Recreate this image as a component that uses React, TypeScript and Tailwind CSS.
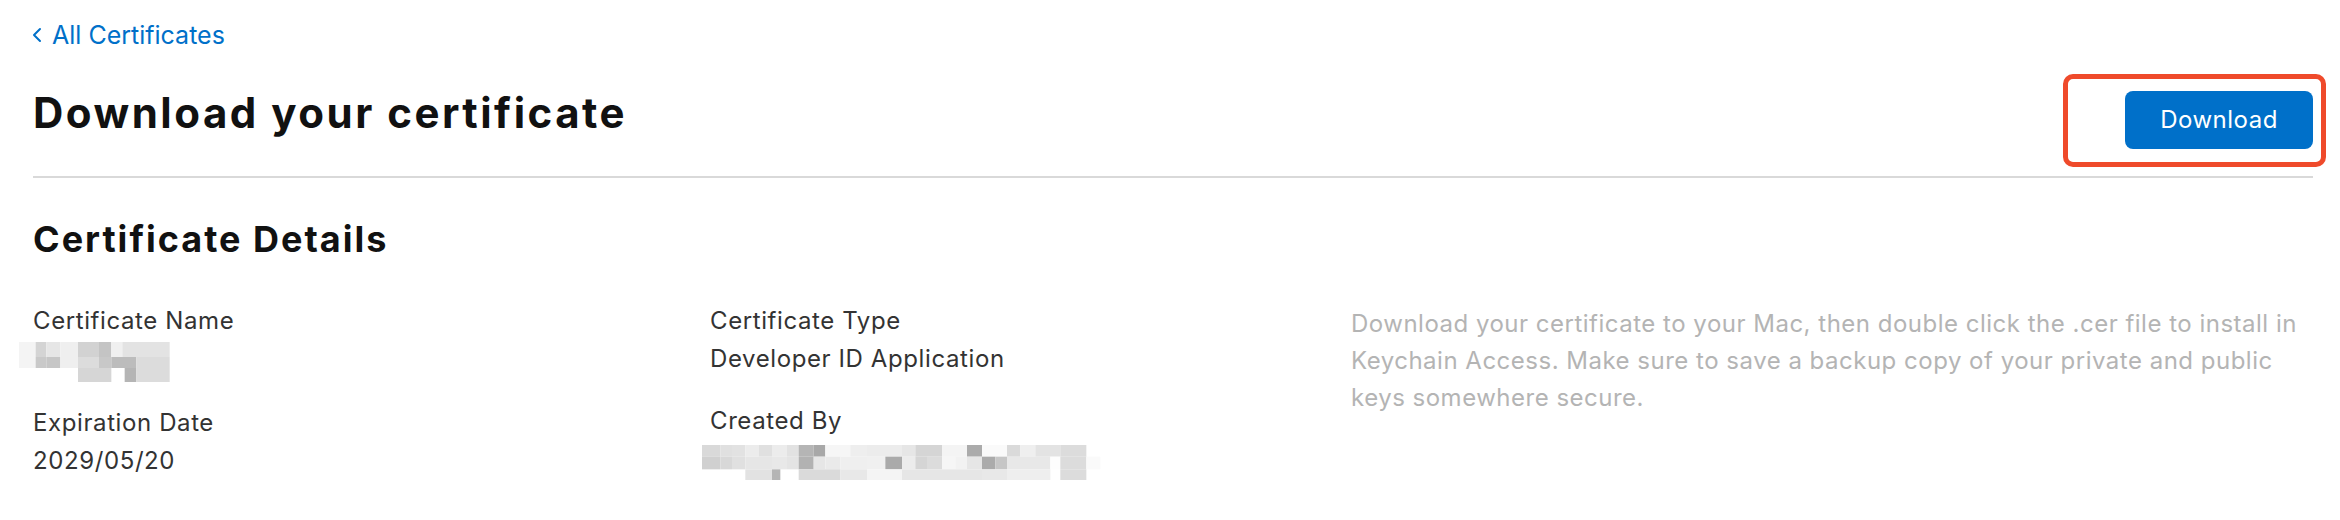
import { ChevronLeft } from 'lucide-react'

type Cell = [number, number, number, number, string]

// pixelated (redacted) blocks, coords in the zoomed reference grid
const nameBlur: Cell[] = [
  [28, 140, 50, 78, '#f4f4f4'],
  [78, 140, 32, 45, '#d4d4d4'],
  [78, 185, 32, 33, '#c9c9c9'],
  [110, 140, 42, 45, '#e6e6e6'],
  [110, 185, 42, 33, '#c6c6c6'],
  [152, 140, 53, 78, '#efefef'],
  [205, 140, 63, 45, '#d2d2d2'],
  [205, 185, 63, 33, '#dcdcdc'],
  [205, 218, 100, 42, '#d6d6d6'],
  [268, 140, 37, 45, '#c4c4c4'],
  [268, 185, 37, 33, '#c8c8c8'],
  [305, 140, 33, 45, '#f0f0f0'],
  [305, 185, 75, 33, '#bcbcbc'],
  [338, 140, 142, 45, '#e3e3e3'],
  [345, 218, 35, 42, '#b5b5b5'],
  [380, 185, 100, 75, '#dcdcdc'],
]

const creatorRow1: [number, number, string][] = [
  [65, 120, '#d9d9d9'], [120, 155, '#e0e0e0'], [155, 195, '#e2e2e2'], [195, 235, '#ececec'],
  [235, 275, '#e0e0e0'], [275, 320, '#ececec'], [320, 355, '#e2e2e2'], [355, 400, '#b5b5b5'],
  [400, 435, '#a8a8a8'], [435, 510, '#f6f6f6'], [510, 560, '#eeeeee'], [560, 665, '#ececec'],
  [665, 705, '#e6e6e6'], [705, 785, '#d5d5d5'], [785, 860, '#f4f4f4'], [860, 905, '#ababab'],
  [905, 980, '#fafafa'], [980, 1020, '#dadada'], [1020, 1065, '#efefef'], [1065, 1140, '#e3e3e3'],
  [1140, 1218, '#dcdcdc'],
]
const creatorRow2: [number, number, string][] = [
  [65, 120, '#d0d0d0'], [120, 155, '#d8d8d8'], [155, 195, '#e0e0e0'], [195, 275, '#e6e6e6'],
  [275, 320, '#e8e8e8'], [320, 355, '#e4e4e4'], [355, 400, '#b2b2b2'], [400, 435, '#e6e6e6'],
  [435, 480, '#eaeaea'], [480, 560, '#efefef'], [560, 615, '#f0f0f0'], [615, 665, '#aaaaaa'],
  [665, 705, '#ececec'], [705, 740, '#d5d5d5'], [740, 785, '#dcdcdc'], [785, 825, '#f6f6f6'],
  [825, 860, '#f2f2f2'], [860, 905, '#e6e6e6'], [905, 945, '#ababab'], [945, 980, '#c6c6c6'],
  [980, 1110, '#e8e8e8'], [1110, 1140, '#fdfdfd'], [1140, 1218, '#dcdcdc'], [1218, 1260, '#fafafa'],
]
const creatorRow3: [number, number, string][] = [
  [195, 275, '#e2e2e2'], [275, 300, '#b5b5b5'], [355, 480, '#dadada'], [480, 560, '#e8e8e8'],
  [560, 665, '#f4f4f4'], [665, 905, '#e6e6e6'], [905, 980, '#e8e8e8'], [980, 1110, '#eeeeee'],
  [1140, 1218, '#dcdcdc'],
]

function NameBlur() {
  return (
    <svg width="151" height="40" viewBox="28 140 453 120" className="-ml-[14px] mt-[2px] block">
      {nameBlur.map(([x, y, w, h, c], i) => (
        <rect key={i} x={x} y={y} width={w} height={h} fill={c} />
      ))}
    </svg>
  )
}

function CreatorBlur() {
  const rows: [number, number, [number, number, string][]][] = [
    [495, 35, creatorRow1],
    [530, 38, creatorRow2],
    [568, 32, creatorRow3],
  ]
  return (
    <svg width="400" height="35" viewBox="65 495 1200 105" className="-ml-[8px] mt-[5px] block">
      {rows.map(([y, h, cells]) =>
        cells.map(([x0, x1, c]) => (
          <rect key={`${y}-${x0}`} x={x0} y={y} width={x1 - x0} height={h} fill={c} />
        )),
      )}
    </svg>
  )
}

function Field({ label, children }: { label: string; children: React.ReactNode }) {
  return (
    <div>
      <p className="text-[24px] leading-[38px] tracking-[0.6px] text-[#333333]">{label}</p>
      <div className="h-[38px] text-[24px] leading-[38px] tracking-[0.6px] text-[#333333]">{children}</div>
    </div>
  )
}

export default function App() {
  return (
    <div className="h-[520px] w-[2340px] bg-white pl-[33px] pr-[27px] pt-[20px] font-['Inter',sans-serif] antialiased">
      <a href="#" className="flex items-center gap-[3px] text-[25px] leading-[30px] text-[#0070c9]">
        <ChevronLeft size={24} strokeWidth={2} className="-ml-[8px]" />
        All Certificates
      </a>

      <div className="mt-[39px] flex items-start justify-between">
        <h1 className="text-[42px] font-bold leading-[48px] tracking-[2.5px] text-[#111111]">
          Download your certificate
        </h1>
        <div className="relative mt-[2px]">
          <div className="absolute -bottom-[18px] -left-[62px] -right-[13px] -top-[17px] rounded-[10px] border-[5px] border-[#ef4a2b]" />
          <button
            type="button"
            className="relative h-[58px] w-[188px] rounded-[8px] bg-[#0070c9] text-[24px] tracking-[0.5px] text-white"
          >
            Download
          </button>
        </div>
      </div>

      <div className="mt-[27px] h-[2px] bg-[#d9d9d9]" />

      <h2 className="mt-[40px] text-[36px] font-bold leading-[42px] tracking-[2px] text-[#111111]">
        Certificate Details
      </h2>

      <div className="mt-[42px] grid grid-cols-[677px_641px_1fr]">
        <div className="space-y-[24px]">
          <Field label="Certificate Name">
            <NameBlur />
          </Field>
          <Field label="Expiration Date">2029/05/20</Field>
        </div>
        <div className="space-y-[24px]">
          <Field label="Certificate Type">Developer ID Application</Field>
          <Field label="Created By">
            <CreatorBlur />
          </Field>
        </div>
        <p className="mt-[3px] whitespace-nowrap text-[24px] leading-[37px] tracking-[0.5px] text-[#b4b4b4]">
          Download your certificate to your Mac, then double click the .cer file to install in
          <br />
          Keychain Access. Make sure to save a backup copy of your private and public
          <br />
          keys somewhere secure.
        </p>
      </div>
    </div>
  )
}
